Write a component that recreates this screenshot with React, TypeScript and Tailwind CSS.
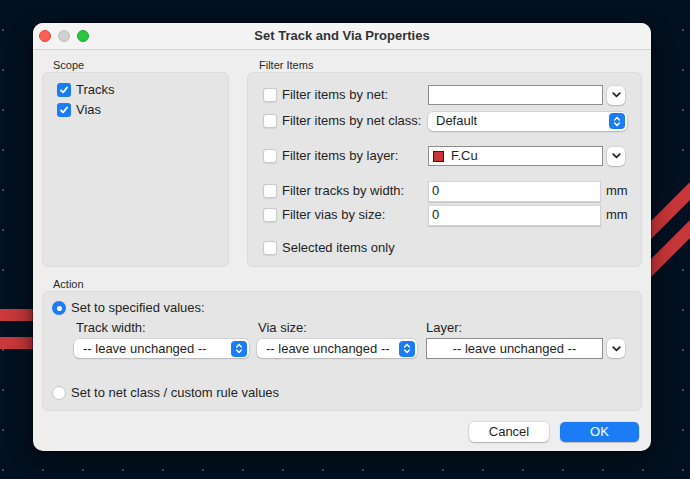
import React from "react";

const Check = ({ checked }: { checked?: boolean }) =>
  checked ? (
    <span className="w-[14px] h-[14px] rounded-[3px] bg-[#1b7cf5] flex items-center justify-center shrink-0">
      <svg width="10" height="10" viewBox="0 0 10 10">
        <path d="M2 5.3 L4.1 7.4 L8.1 2.5" stroke="white" strokeWidth="1.8" fill="none" strokeLinecap="round" strokeLinejoin="round" />
      </svg>
    </span>
  ) : (
    <span className="w-[14px] h-[14px] rounded-[3px] bg-white border border-[#cacaca] shadow-[0_0.5px_1px_rgba(0,0,0,0.08)] shrink-0" />
  );

const Radio = ({ on }: { on?: boolean }) =>
  on ? (
    <span className="w-[14px] h-[14px] rounded-full bg-[#1b7cf5] flex items-center justify-center shrink-0">
      <span className="w-[5px] h-[5px] rounded-full bg-white" />
    </span>
  ) : (
    <span className="w-[14px] h-[14px] rounded-full bg-white border border-[#c6c6c6] shrink-0" />
  );

const Stepper = () => (
  <span className="w-[16px] h-[16px] rounded-[4px] bg-[#1b7cf5] flex items-center justify-center shrink-0">
    <svg width="8" height="11" viewBox="0 0 8 11">
      <path d="M1.6 4 L4 1.6 L6.4 4 M1.6 7 L4 9.4 L6.4 7" stroke="white" strokeWidth="1.4" fill="none" strokeLinecap="round" strokeLinejoin="round" />
    </svg>
  </span>
);

const ChevronBtn = () => (
  <span className="ml-[4px] w-[18px] h-[19px] rounded-[5px] bg-white shadow-[0_0_0_0.5px_rgba(0,0,0,0.15),0_1px_1.5px_rgba(0,0,0,0.15)] flex items-center justify-center shrink-0">
    <svg width="9" height="6" viewBox="0 0 9 6">
      <path d="M1.2 1.2 L4.5 4.4 L7.8 1.2" stroke="#222" strokeWidth="1.7" fill="none" strokeLinecap="round" strokeLinejoin="round" />
    </svg>
  </span>
);

const PopSelect = ({ w, text, pl }: { w: string; text: string; pl: string }) => (
  <div className={`${w} h-[19px] rounded-[5px] bg-white shadow-[0_0_0_0.5px_rgba(0,0,0,0.15),0_1px_1.5px_rgba(0,0,0,0.15)] flex items-center justify-between pr-[2px]`}>
    <span className={pl}>{text}</span>
    <Stepper />
  </div>
);

function Canvas() {
  return (
    <svg className="absolute inset-0" width="690" height="479">
      <defs>
        <pattern id="dots" x="0" y="0" width="40" height="40" patternUnits="userSpaceOnUse">
          <rect x="2" y="29" width="2" height="2" fill="#3f4d5d" />
        </pattern>
        <linearGradient id="lg" x1="0" x2="1" y1="0" y2="0">
          <stop offset="0" stopColor="#cc393c" />
          <stop offset="0.6" stopColor="#c4363a" />
          <stop offset="1" stopColor="#8e2a30" />
        </linearGradient>
      </defs>
      <rect width="690" height="479" fill="url(#dots)" />
      <rect x="0" y="309" width="40" height="12" fill="url(#lg)" />
      <rect x="0" y="337" width="40" height="12" fill="url(#lg)" />
      <polygon points="640,232 700,172 700,190 640,250" fill="#c7363a" />
      <polygon points="640,270 700,210 700,228 640,288" fill="#c7363a" />
    </svg>
  );
}

export default function App() {
  return (
    <div className="relative w-[690px] h-[479px] overflow-hidden bg-[#03101f] font-['Liberation_Sans',Arial,sans-serif] text-[13px] text-[#1f1f1f]">
      <Canvas />
      <div className="relative pt-[23px] pl-[33px]">
        <div className="w-[618px] h-[428px] rounded-[10px] bg-[#eeeeee] shadow-[0_0_0_0.5px_rgba(0,0,0,0.6),0_8px_24px_rgba(0,0,0,0.45)] flex flex-col overflow-hidden">
          {/* title bar */}
          <div className="h-[27px] shrink-0 bg-[#f5f4f4] border-b border-[#d2d2d2] grid grid-cols-[1fr_auto_1fr] items-center">
            <div className="flex items-center gap-[7px] pl-[6px]">
              <span className="w-[12px] h-[12px] rounded-full bg-[#fe5f57] border-[0.5px] border-[#e14640]" />
              <span className="w-[12px] h-[12px] rounded-full bg-[#cfcfcf] border-[0.5px] border-[#bdbdbd]" />
              <span className="w-[12px] h-[12px] rounded-full bg-[#2ac840] border-[0.5px] border-[#1ea930]" />
            </div>
            <div className="font-bold text-[13px] text-[#333]">Set Track and Via Properties</div>
            <div />
          </div>

          {/* content */}
          <div className="flex-1 px-[9px] pt-[8px] flex flex-col">
            <div className="flex gap-[18px]">
              {/* Scope */}
              <div className="w-[187px] flex flex-col">
                <div className="h-[14px] leading-[14px] text-[11px] pl-[11px] text-[#2a2a2a]">Scope</div>
                <div className="h-[195px] rounded-[6px] bg-[#e5e5e5] border border-[#dbdbdb] pt-[7px] pl-[14px]">
                  <div className="h-[20px] flex items-center gap-[5px]">
                    <Check checked />
                    <span>Tracks</span>
                  </div>
                  <div className="h-[20px] flex items-center gap-[5px]">
                    <Check checked />
                    <span>Vias</span>
                  </div>
                </div>
              </div>

              {/* Filter Items */}
              <div className="w-[395px] flex flex-col">
                <div className="h-[14px] leading-[14px] text-[11px] pl-[12px] text-[#2a2a2a]">Filter Items</div>
                <div className="h-[195px] rounded-[6px] bg-[#e5e5e5] border border-[#dbdbdb] pt-[12px] pl-[15px]">
                  <div className="h-[20px] flex items-center">
                    <div className="w-[165px] flex items-center gap-[5px]">
                      <Check />
                      <span>Filter items by net:</span>
                    </div>
                    <div className="w-[175px] h-[20px] bg-white border border-[#8e8e8e]" />
                    <ChevronBtn />
                  </div>
                  <div className="h-[20px] mt-[6px] flex items-center">
                    <div className="w-[165px] flex items-center gap-[5px]">
                      <Check />
                      <span>Filter items by net class:</span>
                    </div>
                    <PopSelect w="w-[199px]" text="Default" pl="pl-[8px]" />
                  </div>
                  <div className="h-[20px] mt-[15px] flex items-center">
                    <div className="w-[165px] flex items-center gap-[5px]">
                      <Check />
                      <span>Filter items by layer:</span>
                    </div>
                    <div className="w-[175px] h-[20px] bg-white border border-[#8e8e8e] flex items-center pl-[4px] gap-[7px]">
                      <span className="w-[11px] h-[11px] bg-[#c83434] border border-[#4a1212]" />
                      <span>F.Cu</span>
                    </div>
                    <ChevronBtn />
                  </div>
                  <div className="h-[20px] mt-[15px] flex items-center">
                    <div className="w-[165px] flex items-center gap-[5px]">
                      <Check />
                      <span>Filter tracks by width:</span>
                    </div>
                    <div className="w-[173px] h-[21px] bg-white border border-[#d3d3d3] shadow-[0_1px_1px_rgba(0,0,0,0.12)] flex items-center pl-[3px]">0</div>
                    <span className="ml-[5px]">mm</span>
                  </div>
                  <div className="h-[20px] mt-[4px] flex items-center">
                    <div className="w-[165px] flex items-center gap-[5px]">
                      <Check />
                      <span>Filter vias by size:</span>
                    </div>
                    <div className="w-[173px] h-[21px] bg-white border border-[#d3d3d3] shadow-[0_1px_1px_rgba(0,0,0,0.12)] flex items-center pl-[3px]">0</div>
                    <span className="ml-[5px]">mm</span>
                  </div>
                  <div className="h-[20px] mt-[13px] flex items-center gap-[5px]">
                    <Check />
                    <span>Selected items only</span>
                  </div>
                </div>
              </div>
            </div>

            {/* Action */}
            <div className="mt-[10px] h-[14px] leading-[14px] text-[11px] pl-[11px] text-[#2a2a2a]">Action</div>
            <div className="h-[120px] rounded-[6px] bg-[#e5e5e5] border border-[#dbdbdb] pt-[6px] pl-[9px]">
              <div className="h-[20px] flex items-center gap-[5px]">
                <Radio on />
                <span>Set to specified values:</span>
              </div>
              <div className="pl-[22px] mt-[2px] flex">
                <div className="w-[175px] flex flex-col">
                  <div className="h-[16px] leading-[16px] pl-[2px]">Track width:</div>
                  <div className="mt-[3px]">
                    <PopSelect w="w-[175px]" text="-- leave unchanged --" pl="pl-[9px]" />
                  </div>
                </div>
                <div className="ml-[8px] w-[160px] flex flex-col">
                  <div className="h-[16px] leading-[16px] pl-[1px]">Via size:</div>
                  <div className="mt-[3px]">
                    <PopSelect w="w-[160px]" text="-- leave unchanged --" pl="pl-[9px]" />
                  </div>
                </div>
                <div className="ml-[9px] flex flex-col">
                  <div className="h-[16px] leading-[16px]">Layer:</div>
                  <div className="mt-[2px] flex items-center">
                    <div className="w-[177px] h-[21px] bg-white border border-[#8e8e8e] flex items-center justify-center">-- leave unchanged --</div>
                    <ChevronBtn />
                  </div>
                </div>
              </div>
              <div className="h-[20px] mt-[24px] flex items-center gap-[5px]">
                <Radio />
                <span>Set to net class / custom rule values</span>
              </div>
            </div>

            {/* Buttons */}
            <div className="mt-[11px] flex justify-end gap-[11px] pr-[3px]">
              <div className="w-[80px] h-[20px] rounded-[5px] bg-white shadow-[0_0_0_0.5px_rgba(0,0,0,0.15),0_1px_1.5px_rgba(0,0,0,0.2)] flex items-center justify-center">Cancel</div>
              <div className="w-[79px] h-[20px] rounded-[5px] bg-[#1c7cf6] shadow-[0_0_0_0.5px_rgba(0,0,0,0.1),0_1px_1px_rgba(0,0,0,0.15)] flex items-center justify-center text-white">OK</div>
            </div>
          </div>
        </div>
      </div>
    </div>
  );
}
